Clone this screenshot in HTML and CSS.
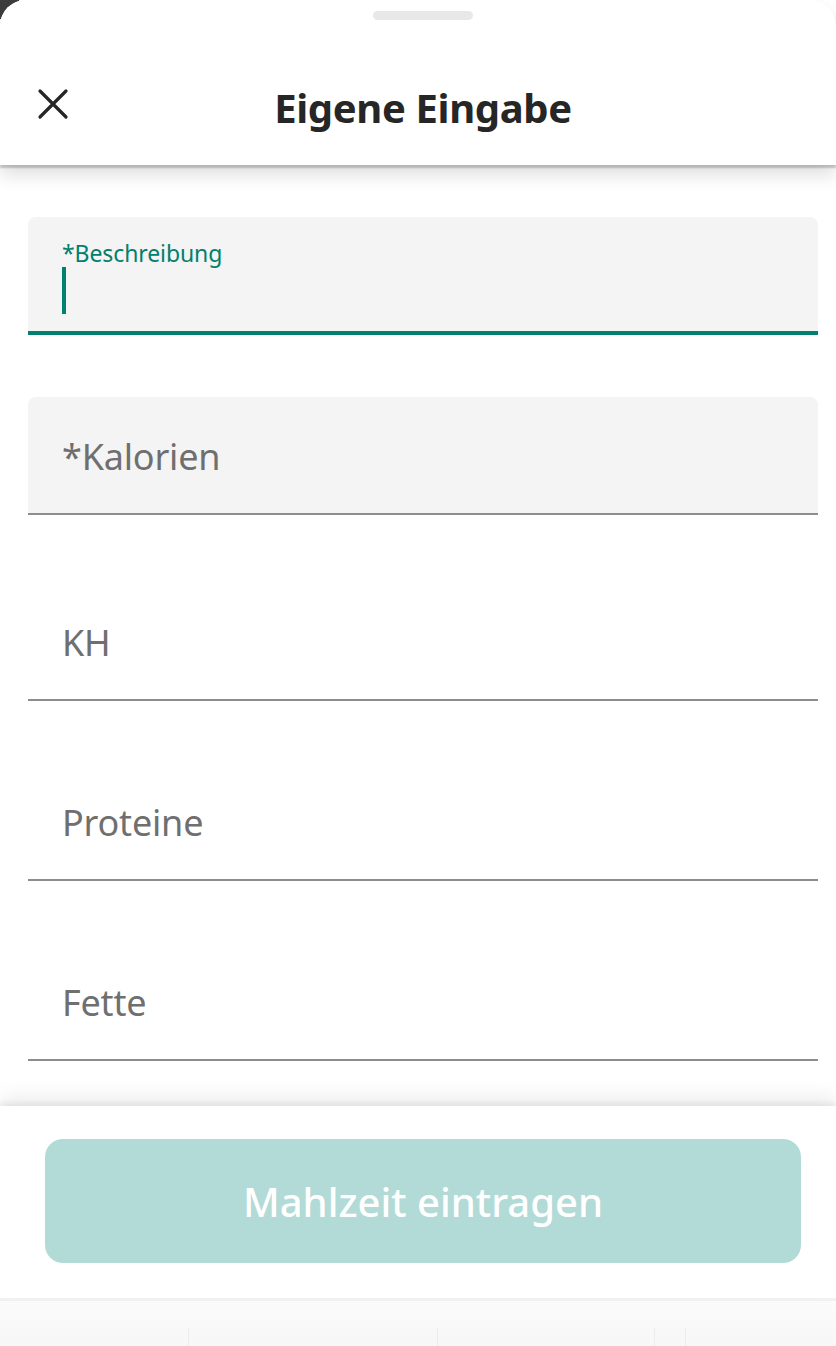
FILE: index.html
```html
<!DOCTYPE html>
<html lang="de">
<head>
<meta charset="utf-8">
<title>Eigene Eingabe</title>
<link rel="stylesheet" href="styles.css">
</head>
<body>
<div class="sheet">
  <header class="header">
    <div class="handle"></div>
    <div class="bar">
      <button class="close" aria-label="Schließen">
        <svg width="32" height="32" viewBox="0 0 32 32"><path d="M3 3 L29 29 M29 3 L3 29" stroke="#262626" stroke-width="3.2" stroke-linecap="round" fill="none"/></svg>
      </button>
      <h1 class="title">Eigene Eingabe</h1>
    </div>
  </header>
  <main class="form">
    <div class="field filled focused">
      <span class="label-small">*Beschreibung</span>
      <span class="cursor"></span>
    </div>
    <div class="field filled">
      <span class="label">*Kalorien</span>
    </div>
    <div class="field plain first-plain">
      <span class="label">KH</span>
    </div>
    <div class="field plain">
      <span class="label">Proteine</span>
    </div>
    <div class="field plain">
      <span class="label">Fette</span>
    </div>
  </main>
  <footer class="footer">
    <button class="submit">Mahlzeit eintragen</button>
  </footer>
  <nav class="underlay">
    <span class="seg s1"></span>
    <span class="seg s2"></span>
    <span class="seg s3"></span>
    <span class="seg s4"></span>
  </nav>
</div>
</body>
</html>
```
FILE: styles.css
```css
html, body {
  margin: 0;
  padding: 0;
}
body {
  width: 836px;
  height: 1346px;
  overflow: hidden;
  background: linear-gradient(135deg, #3d3d3d 0, #3d3d3d 14px, #ffffff 14px);
  font-family: "Noto Sans", "Open Sans", sans-serif;
}
.sheet {
  background: #ffffff;
  border-top-left-radius: 26px;
  border-top-right-radius: 26px;
  height: 1346px;
  display: flex;
  flex-direction: column;
}
.header {
  height: 165px;
  position: relative;
  z-index: 2;
  background: #ffffff;
  border-top-left-radius: 26px;
  border-top-right-radius: 26px;
  box-shadow: 0 3px 2px rgba(0,0,0,0.2), 0 10px 18px rgba(0,0,0,0.13);
  display: flex;
  flex-direction: column;
  align-items: center;
  padding-left: 10px;
  box-sizing: border-box;
}
.handle {
  margin-top: 11px;
  width: 100px;
  height: 9px;
  border-radius: 5px;
  background: #e8e8e8;
}
.bar {
  width: 100%;
  flex: 1;
  display: flex;
  align-items: flex-start;
  justify-content: center;
  position: relative;
}
.close {
  position: absolute;
  left: 27px;
  top: 68px;
  width: 32px;
  height: 32px;
  padding: 0;
  border: 0;
  background: none;
}
.close svg { display: block; }
.title {
  margin: 0;
  margin-top: 60px;
  font-size: 40px;
  line-height: 56px;
  font-weight: 700;
  color: #262626;
  letter-spacing: -0.35px;
}
.form {
  padding: 52px 18px 0 28px;
  display: flex;
  flex-direction: column;
}
.field {
  height: 118px;
  box-sizing: border-box;
  border-bottom: 2px solid #8d8d8d;
  padding-left: 34px;
  padding-top: 3px;
  display: flex;
  flex-direction: column;
  justify-content: center;
  margin-bottom: 62px;
}
.field:last-child { margin-bottom: 0; }
.filled {
  background: #f4f4f4;
  border-top-left-radius: 8px;
  border-top-right-radius: 8px;
}
.focused {
  border-bottom: 4px solid #00806e;
  justify-content: flex-start;
  padding-top: 23px;
}
.first-plain { margin-top: 6px; }
.label {
  font-size: 36px;
  color: #6f6f6f;
  line-height: 1;
  letter-spacing: -0.2px;
}
.label-small {
  font-size: 23px;
  line-height: 27px;
  color: #00806e;
  letter-spacing: -0.1px;
}
.cursor {
  display: block;
  width: 4px;
  height: 47px;
  background: #00806e;
}
.footer {
  margin-top: 45px;
  height: 192px;
  box-sizing: border-box;
  background: #ffffff;
  box-shadow: 0 -4px 4px rgba(0,0,0,0.05), 0 -10px 18px rgba(0,0,0,0.07);
  padding: 33px 35px 0 45px;
  position: relative;
  z-index: 2;
}
.submit {
  width: 100%;
  height: 124px;
  border: 0;
  border-radius: 18px;
  background: #b2dbd7;
  color: #ffffff;
  font-family: "Noto Sans", "Open Sans", sans-serif;
  font-size: 40px;
  font-weight: 500;
}
.underlay {
  flex: 1;
  border-top: 3px solid #f2f2f2;
  background: linear-gradient(#fbfbfb, #f7f7f7);
  position: relative;
}
.seg {
  position: absolute;
  bottom: 0;
  width: 1px;
  height: 18px;
  background: #ececec;
}
.s1 { left: 188px; }
.s2 { left: 437px; }
.s3 { left: 654px; }
.s4 { left: 685px; }
```
